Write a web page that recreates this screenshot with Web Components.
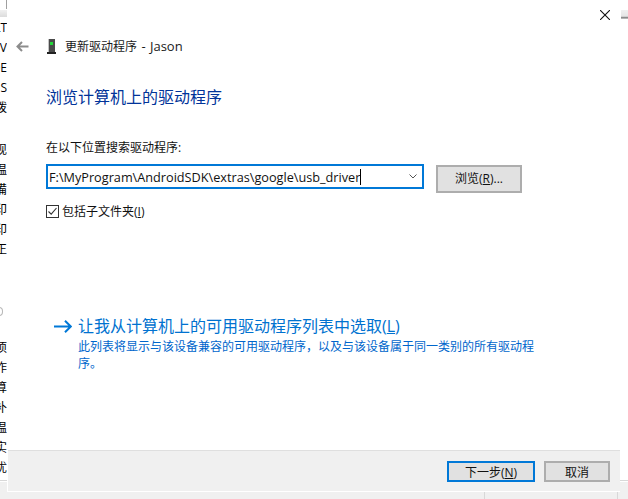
<!DOCTYPE html>
<html lang="zh-CN">
  <head>
    <meta charset="UTF-8" />
    <title>更新驱动程序</title>
    <style>
      html, body { margin: 0; height: 100%; overflow: hidden; background: #fff; }
      body { font: 12px "Open Sans", "Noto Sans CJK SC", sans-serif; color: #000; }
    </style>
  </head>
  <body>
    <back-window>
      <span>LT</span><span>V</span><span>DE</span><span>S</span><span>拨</span>
      <span class="gap"></span>
      <span>现</span><span>温</span><span>備</span><span>印</span><span>印</span><span>正</span>
      <span class="gap wide"></span>
      <span>项</span><span>作</span><span>算</span><span>补</span><span>温</span><span>实</span><span>优</span>
    </back-window>

    <wizard-dialog>
      <span slot="title">更新驱动程序<span style="font-size:13px;word-spacing:1px"> - Jason</span></span>
      <span slot="heading">浏览计算机上的驱动程序</span>

      <path-combo label="在以下位置搜索驱动程序:" value="F:\MyProgram\AndroidSDK\extras\google\usb_driver"></path-combo>
      <check-box>包括子文件夹(<u>I</u>)</check-box>
      <command-link>
        <span slot="title">让我从计算机上的可用驱动程序列表中选取(<u>L</u>)</span>
        此列表将显示与该设备兼容的可用驱动程序，以及与该设备属于同一类别的所有驱动程序。
      </command-link>

      <win-button slot="footer" primary style="width:88px">下一步(<u>N</u>)</win-button>
      <win-button slot="footer" style="width:66px">取消</win-button>
    </wizard-dialog>

    <script>
      // 后面那个窗口，只露出左右两条边
      class BackWindow extends HTMLElement {
        constructor() {
          super();
          this.attachShadow({ mode: "open" });
        }

        connectedCallback() {
          this.shadowRoot.innerHTML = `
            <style>
              :host { position: absolute; inset: 0; display: block; background: #fff; overflow: hidden; }
              .left { position: absolute; left: 0; top: 0; width: 7px; height: 100%; overflow: hidden; }
              .tick { width: 1px; height: 9px; margin-left: 6px; background: #a0a0a0; }
              .bar { height: 7px; margin-top: 1px; background: linear-gradient(#f0f0f0, #dcdcdc); }
              .rows { display: flex; flex-direction: column; margin-top: 1px; }
              ::slotted(span) { display: flex; justify-content: flex-end; height: 20px; line-height: 20px; white-space: nowrap; }
              ::slotted(span.gap) { height: 22px; }
              ::slotted(span.wide) { height: 78px; }
              .round { position: absolute; left: -1px; top: 307px; width: 3px; height: 7px; border: 1px solid #b8b8b8; border-left: 0; border-radius: 0 5px 5px 0; }
              .right-bar { position: absolute; left: 621px; top: 10px; width: 7px; height: 9px; background: linear-gradient(#f0f0f0 0, #e6e6e6 70%, #808080 80%, #c8c8c8 100%); }
              .bottom { position: absolute; left: 0; right: 0; top: 480px; bottom: 0; background: #f0f0f0; border-top: 1px solid #d8d8d8; box-shadow: inset 0 1px 0 #fff; }
              .bottom i { position: absolute; top: 0; bottom: 0; width: 1px; background: #d8d8d8; }
            </style>
            <div class="left">
              <div class="tick"></div>
              <div class="bar"></div>
              <div class="rows"><slot></slot></div>
              <div class="round"></div>
            </div>
            <div class="right-bar"></div>
            <div class="bottom"><i style="left:484px"></i><i style="left:617px"></i></div>
          `;
        }
      }

      class WizardDialog extends HTMLElement {
        constructor() {
          super();
          this.attachShadow({ mode: "open" });
        }

        connectedCallback() {
          this.shadowRoot.innerHTML = `
            <style>
              :host { position: absolute; left: 7px; top: 0; width: 613px; height: 492px; box-sizing: border-box; display: flex; flex-direction: column; background: #fff; border: solid #fff; border-width: 0 0 1px 1px; }
              .close { height: 30px; display: flex; justify-content: flex-end; align-items: flex-start; padding: 10px 10px 0 0; box-sizing: border-box; }
              .nav { height: 32px; display: flex; align-items: center; padding-left: 8px; font-size: 12px; color: #1a1a1a; }
              .nav svg { display: block; }
              .phone { margin: 0 9px 0 18px; }
              h1 { margin: 23px 0 0 38px; height: 24px; font: 400 16px/24px "Open Sans", "Noto Sans CJK SC", sans-serif; color: #003399; }
              .main { flex: 1; display: flex; flex-direction: column; padding-left: 38px; }
              footer { height: 41px; box-sizing: border-box; background: #f0f0f0; border-top: 1px solid #dfdfdf; display: flex; justify-content: flex-end; gap: 9px; padding: 10px 10px 0 0; }
            </style>
            <div class="close">
              <svg width="10" height="10" viewBox="0 0 10 10"><path d="M0 0L10 10M10 0L0 10" stroke="#111" stroke-width="1.1" fill="none"/></svg>
            </div>
            <div class="nav">
              <svg width="13" height="11" viewBox="0 0 13 11"><path d="M12.5 5.5H1.5M6 1L1.5 5.5L6 10" stroke="#8c8c8c" stroke-width="2" fill="none"/></svg>
              <svg class="phone" width="9" height="15" viewBox="0 0 9 15">
                <rect x="1" y="0" width="7" height="13" fill="#4a4a4a"/>
                <rect x="1" y="0" width="1" height="13" fill="#c4c4c4"/>
                <rect x="3" y="3" width="3" height="3" fill="#22d83a"/>
                <rect x="0" y="13" width="9" height="2" fill="#222"/>
              </svg>
              <slot name="title"></slot>
            </div>
            <h1><slot name="heading"></slot></h1>
            <div class="main"><slot></slot></div>
            <footer><slot name="footer"></slot></footer>
          `;
        }
      }

      class PathCombo extends HTMLElement {
        constructor() {
          super();
          this.attachShadow({ mode: "open" });
        }

        connectedCallback() {
          const label = this.getAttribute("label");
          const value = this.getAttribute("value");
          this.shadowRoot.innerHTML = `
            <style>
              :host { display: block; margin-top: 31px; font-size: 12px; }
              label { display: block; height: 16px; line-height: 16px; color: #111; }
              .row { display: flex; align-items: flex-start; gap: 12px; margin-top: 8px; }
              .box { width: 378px; height: 25px; box-sizing: border-box; border: 2px solid #0078d7; display: flex; align-items: center; padding: 0 5px 0 1px; }
              .text { font-size: 12.7px; line-height: 16px; white-space: nowrap; color: #111; }
              .caret { width: 1px; height: 16px; background: #000; }
              svg { margin-left: auto; }
            </style>
            <label>${label}</label>
            <div class="row">
              <div class="box">
                <span class="text">${value}</span><span class="caret"></span>
                <svg width="8" height="5" viewBox="0 0 8 5"><path d="M.5 .5L4 4L7.5 .5" stroke="#555" fill="none"/></svg>
              </div>
              <win-button style="width:86px;height:28px;margin-top:1px;padding-bottom:2px">浏览(<u>R</u>)...</win-button>
            </div>
          `;
        }
      }

      class CheckBox extends HTMLElement {
        constructor() {
          super();
          this.attachShadow({ mode: "open" });
        }

        connectedCallback() {
          this.shadowRoot.innerHTML = `
            <style>
              :host { display: flex; align-items: center; gap: 3px; height: 13px; margin-top: 12px; font-size: 12px; color: #111; }
              .mark { width: 13px; height: 13px; box-sizing: border-box; border: 1px solid #333; display: flex; }
              .label { line-height: 13px; margin-top: -1px; }
            </style>
            <span class="mark"><svg width="11" height="11" viewBox="0 0 11 11"><path d="M1.5 5.5L4.2 8.2L9.5 2" stroke="#333" stroke-width="1.1" fill="none"/></svg></span>
            <span class="label"><slot></slot></span>
          `;
        }
      }

      class CommandLink extends HTMLElement {
        constructor() {
          super();
          this.attachShadow({ mode: "open" });
        }

        connectedCallback() {
          this.shadowRoot.innerHTML = `
            <style>
              :host { display: grid; grid-template-columns: 18px 1fr; column-gap: 6px; width: 490px; margin: 96px 0 0 8px; color: #0066cc; }
              svg { align-self: center; }
              .title { height: 24px; line-height: 24px; font-size: 16px; color: #0072d0; white-space: nowrap; }
              .desc { grid-column: 2; width: 460px; font-size: 12px; line-height: 17px; }
            </style>
            <svg width="18" height="13" viewBox="0 0 18 13"><path d="M0 6.5H16.5M11 .7L16.8 6.5L11 12.3" stroke="#0078d7" stroke-width="2" fill="none"/></svg>
            <div class="title"><slot name="title"></slot></div>
            <div class="desc"><slot></slot></div>
          `;
        }
      }

      class WinButton extends HTMLElement {
        constructor() {
          super();
          this.attachShadow({ mode: "open" });
        }

        connectedCallback() {
          this.shadowRoot.innerHTML = `
            <style>
              :host { display: flex; align-items: center; justify-content: center; height: 21px; box-sizing: border-box; background: #e1e1e1; border: 2px solid #adadad; font-size: 12px; color: #111; }
              :host([primary]) { border-color: #0078d7; }
            </style>
            <span><slot></slot></span>
          `;
        }
      }

      window.customElements.define("back-window", BackWindow);
      window.customElements.define("wizard-dialog", WizardDialog);
      window.customElements.define("path-combo", PathCombo);
      window.customElements.define("check-box", CheckBox);
      window.customElements.define("command-link", CommandLink);
      window.customElements.define("win-button", WinButton);
    </script>
  </body>
</html>
